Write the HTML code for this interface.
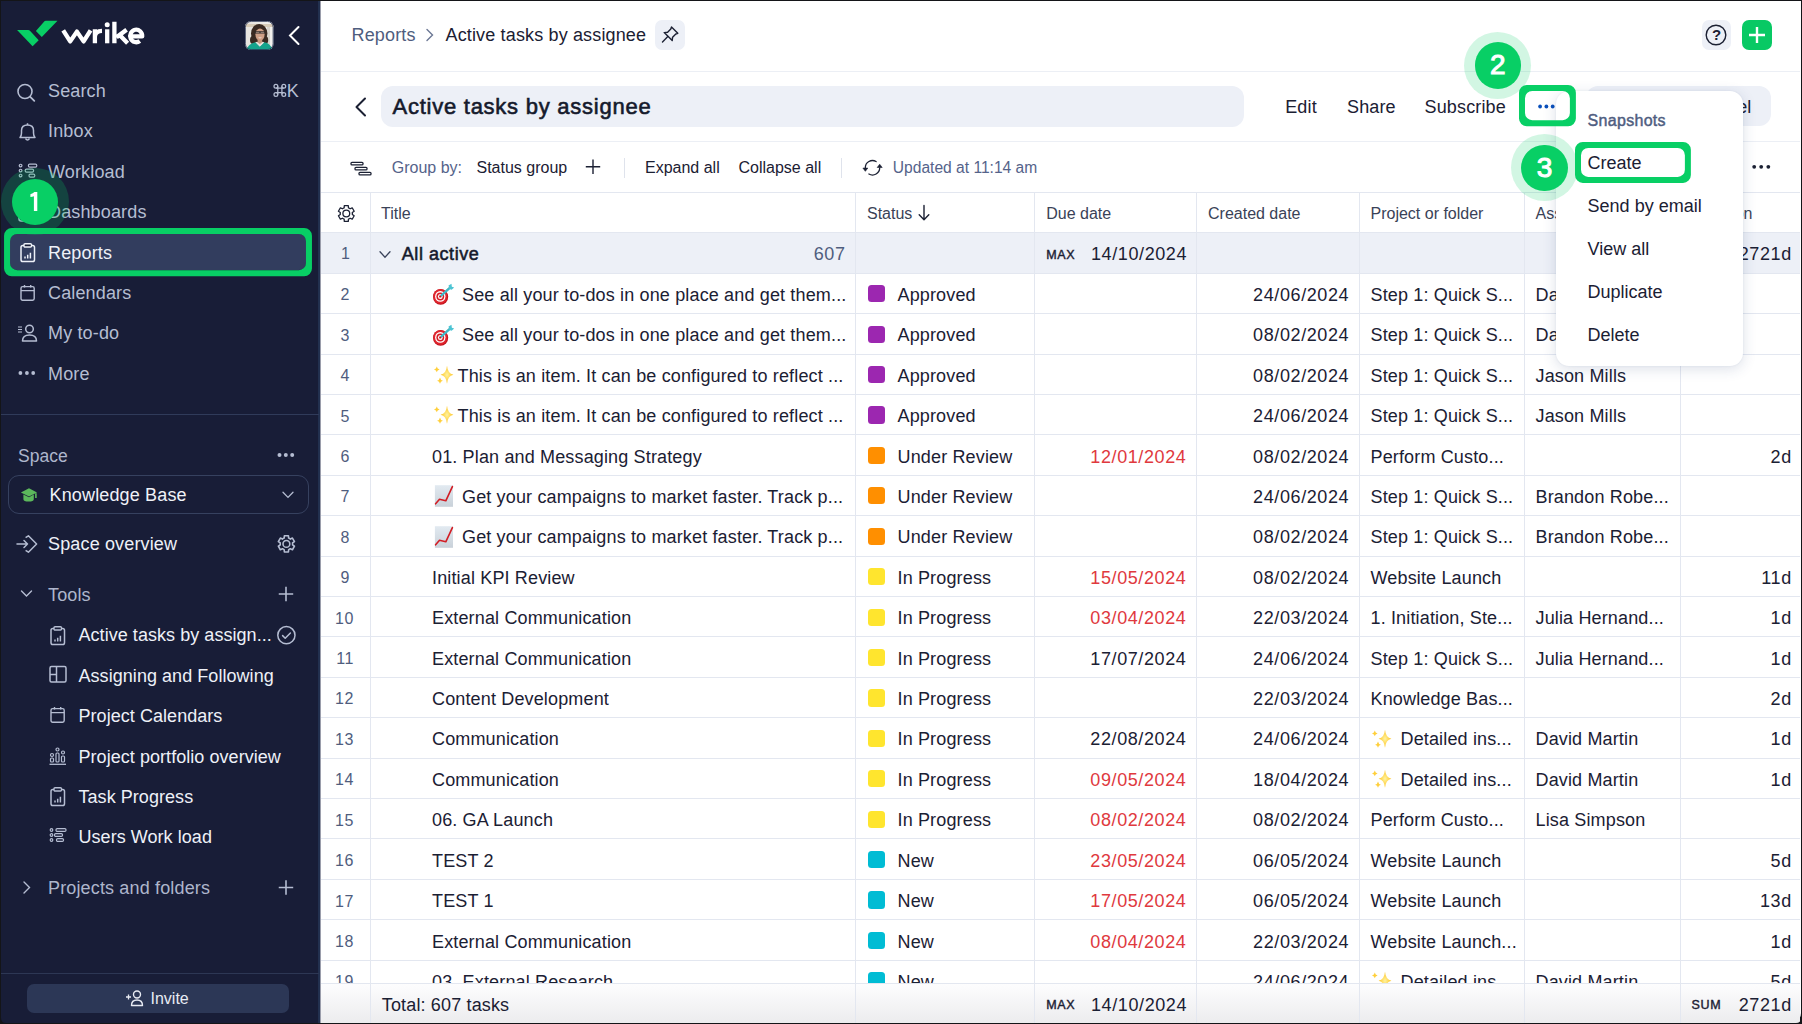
<!DOCTYPE html><html><head><meta charset="utf-8"><title>Wrike report</title><style>
html,body{margin:0;padding:0;width:1802px;height:1024px;overflow:hidden;background:#141518;}
body{position:relative;font-family:"Liberation Sans", sans-serif;}
.t{position:absolute;white-space:nowrap;}
#win{position:absolute;left:1px;top:1px;width:1799.5px;height:1021.5px;overflow:hidden;border-radius:0 0 10px 10px;background:#fff;}
#side{position:absolute;left:0;top:0;width:319px;height:1022px;background:#181d37;}
svg{overflow:visible}
</style></head><body>
<div id="win"></div>

<div style="position:absolute;left:1px;top:1px;width:319px;height:1022px;background:#181d37;"></div>
<div style="position:absolute;left:318.4px;top:1px;width:1.3px;height:1022px;background:#22304f;"></div>
<div style="position:absolute;left:319.7px;top:1px;width:0.9px;height:1022px;background:#9a9dab;"></div>
<svg style="position:absolute;left:0px;top:0px;" width="60" height="60" viewBox="0 0 60 60"><path d="M17.1 30 L28.2 30 Q29.3 30 30.2 30.9 L38.7 40.2 L32.6 46.3 Z" fill="#08cf65"/><path d="M45.9 20.8 L57.5 20.8 L41.8 37 L35.9 31.1 L43.8 21.9 Q44.7 20.8 45.9 20.8 Z" fill="#08cf65"/></svg>
<svg style="position:absolute;left:55px;top:15px;" width="100" height="40" viewBox="0 0 100 40"><g transform="translate(-55,-15)" fill="none" stroke="#fff" stroke-width="4.3" stroke-linejoin="round"><path d="M63.2 30.3 L70.2 41.4 L76.9 31.6 L83.6 41.4 L90.6 30.3"/><path d="M94.9 29.3 V43.3 M94.9 36.5 Q95.5 31 102 30.9"/><path d="M107.2 29.3 V43.3"/><path d="M114.4 21.8 V43.3 M126.6 29.7 L116.5 37.3 M119.6 35 L127.6 43.3"/><path d="M131 36.3 H142.2 A6 6.3 0 1 0 139.8 41"/></g><circle cx="52.2" cy="9.8" r="2.5" fill="#fff"/></svg>
<svg style="position:absolute;left:244.5px;top:20.5px;" width="29" height="29" viewBox="0 0 29 29"><defs><clipPath id="avc"><rect x="0" y="0" width="28.5" height="29" rx="6"/></clipPath><linearGradient id="avbg" x1="0" y1="0" x2="1" y2="0"><stop offset="0" stop-color="#e6e3de"/><stop offset="1" stop-color="#f3f2ef"/></linearGradient></defs><g clip-path="url(#avc)"><rect width="29" height="29" fill="url(#avbg)"/><rect x="0" y="3" width="29" height="3" fill="#d8ccb8"/><rect x="22" y="6" width="3" height="20" fill="#d9d4cc"/><ellipse cx="14.2" cy="12.6" rx="8.2" ry="9.6" fill="#3a2a22"/><ellipse cx="8" cy="19" rx="3" ry="4" fill="#3a2a22"/><ellipse cx="20.6" cy="19" rx="2.6" ry="3.8" fill="#3a2a22"/><ellipse cx="15" cy="13.6" rx="4.6" ry="6.1" fill="#cf9f86"/><rect x="9.6" y="10.2" width="10.6" height="2.4" rx="1" fill="#2b2626"/><rect x="10.8" y="10.8" width="3.6" height="1.3" fill="#8d7a70"/><rect x="15.6" y="10.8" width="3.6" height="1.3" fill="#8d7a70"/><path d="M13 16.6 Q15 18.2 17 16.6" fill="#f5ece6"/><rect x="12.6" y="18.6" width="4.6" height="4" fill="#c8967d"/><path d="M1 30 Q3 22.5 10.5 21.2 L14.8 25.5 L19.2 21.2 Q26 22.3 28 30 Z" fill="#15a38c"/><path d="M10.5 21.2 L14.8 25.5 L19.2 21.2 L17.6 20.8 L14.8 23.6 L12.2 20.8 Z" fill="#e8e0da"/></g><rect x="0.4" y="0.4" width="27.7" height="28.2" rx="5.8" fill="none" stroke="#2a3555" stroke-width="0.8"/></svg>
<svg style="position:absolute;left:288px;top:25px;" width="14" height="22" viewBox="0 0 14 22"><path d="M10.5 2 L2 10.5 L10.5 19" fill="none" stroke="#fff" stroke-width="2" stroke-linecap="round"/></svg>
<div style="position:absolute;left:10px;top:234px;width:296px;height:36px;background:#323d5e;border-radius:7px;"></div>
<div class="t " style="left:48.00px;top:79.96px;font-size:18px;line-height:22px;color:#b5bdd2;letter-spacing:0.15px;">Search</div>
<div class="t " style="left:48.00px;top:120.36px;font-size:18px;line-height:22px;color:#b5bdd2;letter-spacing:0.15px;">Inbox</div>
<div class="t " style="left:48.00px;top:160.76px;font-size:18px;line-height:22px;color:#b5bdd2;letter-spacing:0.15px;">Workload</div>
<div class="t " style="left:48.00px;top:201.16px;font-size:18px;line-height:22px;color:#b5bdd2;letter-spacing:0.15px;">Dashboards</div>
<div class="t " style="left:48.00px;top:241.56px;font-size:18px;line-height:22px;color:#eef1f8;letter-spacing:0.15px;">Reports</div>
<div class="t " style="left:48.00px;top:281.96px;font-size:18px;line-height:22px;color:#b5bdd2;letter-spacing:0.15px;">Calendars</div>
<div class="t " style="left:48.00px;top:322.36px;font-size:18px;line-height:22px;color:#b5bdd2;letter-spacing:0.15px;">My to-do</div>
<div class="t " style="left:48.00px;top:362.76px;font-size:18px;line-height:22px;color:#b5bdd2;letter-spacing:0.15px;">More</div>
<svg style="position:absolute;left:271.5px;top:84px;" width="16" height="14" viewBox="0 0 16 14"><path d="M5.8 2.3 V10.5 M9.9 2.3 V10.5 M3.9 4.2 H11.8 M3.9 8.6 H11.8" fill="none" stroke="#b5bdd2" stroke-width="1.25"/><circle cx="3.9" cy="2.3" r="1.9" fill="none" stroke="#b5bdd2" stroke-width="1.25"/><circle cx="11.8" cy="2.3" r="1.9" fill="none" stroke="#b5bdd2" stroke-width="1.25"/><circle cx="11.8" cy="10.5" r="1.9" fill="none" stroke="#b5bdd2" stroke-width="1.25"/><circle cx="3.9" cy="10.5" r="1.9" fill="none" stroke="#b5bdd2" stroke-width="1.25"/></svg>
<div class="t " style="right:1503.20px;text-align:right;top:79.96px;font-size:18px;line-height:22px;color:#b5bdd2;letter-spacing:0.15px;">K</div>
<svg style="position:absolute;left:16px;top:83px;" width="22" height="22" viewBox="0 0 22 22"><circle cx="9" cy="8.5" r="7" fill="none" stroke="#b5bdd2" stroke-width="1.6"/><path d="M14 13.6 L18.3 17.9" stroke="#b5bdd2" stroke-width="1.8" stroke-linecap="round"/></svg>
<svg style="position:absolute;left:18px;top:122px;" width="20" height="22" viewBox="0 0 20 22"><path d="M2 15.5 H17 Q15.5 14 15.5 11 V8.5 Q15.5 3 9.5 3 Q3.5 3 3.5 8.5 V11 Q3.5 14 2 15.5 Z" fill="none" stroke="#b5bdd2" stroke-width="1.5" stroke-linejoin="round"/><path d="M9.5 1.2 V3" stroke="#b5bdd2" stroke-width="1.5"/><path d="M7.5 16.5 Q9.5 19.5 11.5 16.5" fill="none" stroke="#b5bdd2" stroke-width="1.4"/></svg>
<svg style="position:absolute;left:17px;top:162px;" width="24" height="20" viewBox="0 0 24 20"><circle cx="3.6" cy="3.6" r="1.35" fill="none" stroke="#b5bdd2" stroke-width="1.2"/><circle cx="3.6" cy="8.6" r="1.35" fill="none" stroke="#b5bdd2" stroke-width="1.2"/><circle cx="3.6" cy="13.6" r="1.35" fill="none" stroke="#b5bdd2" stroke-width="1.2"/><rect x="11.4" y="2.2" width="8.4" height="2.9" rx="1.3" fill="none" stroke="#b5bdd2" stroke-width="1.2"/><rect x="8.2" y="7.2" width="8.4" height="2.9" rx="1.3" fill="none" stroke="#b5bdd2" stroke-width="1.2"/><rect x="12" y="12.2" width="5.8" height="2.9" rx="1.3" fill="none" stroke="#b5bdd2" stroke-width="1.2"/></svg>
<svg style="position:absolute;left:18px;top:203px;" width="20" height="20" viewBox="0 0 20 20"><rect x="1" y="1" width="16" height="17" rx="2" fill="none" stroke="#b5bdd2" stroke-width="1.5"/></svg>
<svg style="position:absolute;left:19.5px;top:243px;" width="18" height="20" viewBox="0 0 18 20"><rect x="1" y="2.5" width="13.5" height="16" rx="1.8" fill="none" stroke="#eef1f8" stroke-width="1.5"/><rect x="4" y="0.8" width="7.5" height="3.2" rx="1" fill="#181d37" stroke="#eef1f8" stroke-width="1.4"/><path d="M5 15.5 V13.5 M7.7 15.5 V11.8 M10.4 15.5 V9.8" stroke="#eef1f8" stroke-width="1.5"/></svg>
<svg style="position:absolute;left:19.5px;top:283.6px;" width="20" height="20" viewBox="0 0 20 20"><rect x="1" y="2.6" width="13.2" height="13.6" rx="1.6" fill="none" stroke="#b5bdd2" stroke-width="1.4"/><path d="M1 6.6 H14.2 M4.5 0.9 V3.6 M10.7 0.9 V3.6" stroke="#b5bdd2" stroke-width="1.4"/></svg>
<svg style="position:absolute;left:17px;top:324px;" width="24" height="20" viewBox="0 0 24 20"><path d="M1 3 H5 M1 5.5 H5 M1 8 H5" stroke="#b5bdd2" stroke-width="1.2"/><circle cx="12.5" cy="5" r="3.8" fill="none" stroke="#b5bdd2" stroke-width="1.5"/><path d="M5.5 17 Q5.5 11 12.5 11 Q19.5 11 19.5 17 Z" fill="none" stroke="#b5bdd2" stroke-width="1.5" stroke-linejoin="round"/></svg>
<svg style="position:absolute;left:17px;top:369px;" width="22" height="8" viewBox="0 0 22 8"><circle cx="3.4" cy="4" r="1.9" fill="#b5bdd2"/><circle cx="9.9" cy="4" r="1.9" fill="#b5bdd2"/><circle cx="16.2" cy="4" r="1.9" fill="#b5bdd2"/></svg>
<div style="position:absolute;left:1px;top:413.8px;width:318px;height:1.4px;background:#303b5a;"></div>
<div class="t " style="left:18.00px;top:445.44px;font-size:17.5px;line-height:22px;color:#aeb6cc;">Space</div>
<svg style="position:absolute;left:276px;top:451px;" width="22" height="8" viewBox="0 0 22 8"><circle cx="3.5" cy="4" r="2" fill="#b5bdd2"/><circle cx="9.8" cy="4" r="2" fill="#b5bdd2"/><circle cx="16.2" cy="4" r="2" fill="#b5bdd2"/></svg>
<div style="position:absolute;left:7.5px;top:475.3px;width:301.3px;height:39.2px;border:1.3px solid #36415f;border-radius:11px;box-sizing:border-box;"></div>
<svg style="position:absolute;left:20px;top:486px;" width="24" height="20" viewBox="0 0 24 20"><path d="M0.9 6.5 L9 2.2 L17 6.5 L9 10.6 Z" fill="#5cb85c"/><path d="M3.4 8.6 V13.2 Q3.4 15.6 8.6 15.6 Q13.8 15.6 13.8 13.2 V8.6 L9 11.3 Z" fill="#5cb85c"/><path d="M15.9 7.2 V12" stroke="#5cb85c" stroke-width="1.6"/></svg>
<div class="t " style="left:49.50px;top:484.46px;font-size:18px;line-height:22px;color:#f0f2f8;letter-spacing:0.15px;">Knowledge Base</div>
<svg style="position:absolute;left:281px;top:490px;" width="14" height="10" viewBox="0 0 14 10"><path d="M2 2.2 L7 7.4 L12 2.2" fill="none" stroke="#b5bdd2" stroke-width="1.3" stroke-linecap="round"/></svg>
<svg style="position:absolute;left:16px;top:533px;" width="22" height="22" viewBox="0 0 22 22"><path d="M1 11 H11.5 M8 7.5 L11.5 11 L8 14.5" fill="none" stroke="#b5bdd2" stroke-width="1.5" stroke-linecap="round" stroke-linejoin="round"/><path d="M9.6 4.6 L12.4 2.8 L20.6 11 L12.4 19.2 L9.6 17.4" fill="none" stroke="#b5bdd2" stroke-width="1.5" stroke-linejoin="round"/></svg>
<div class="t " style="left:48.00px;top:533.36px;font-size:18px;line-height:22px;color:#eef1f8;letter-spacing:0.15px;">Space overview</div>
<svg style="position:absolute;left:274px;top:532px;" width="24" height="24" viewBox="0 0 24 24"><path d="M10.17 6.10 L10.37 3.75 L14.43 3.75 L14.63 6.10 A6.22 6.22 0 0 1 16.31 7.07 L18.44 6.06 L20.47 9.58 L18.54 10.93 A6.22 6.22 0 0 1 18.54 12.87 L20.47 14.22 L18.44 17.74 L16.31 16.73 A6.22 6.22 0 0 1 14.63 17.70 L14.43 20.05 L10.37 20.05 L10.17 17.70 A6.22 6.22 0 0 1 8.49 16.73 L6.36 17.74 L4.33 14.22 L6.26 12.87 A6.22 6.22 0 0 1 6.26 10.93 L4.33 9.58 L6.36 6.06 L8.49 7.07 A6.22 6.22 0 0 1 10.17 6.10 Z" fill="none" stroke="#b5bdd2" stroke-width="1.6" stroke-linejoin="round"/><circle cx="12.4" cy="11.9" r="3.4" fill="none" stroke="#b5bdd2" stroke-width="1.6"/></svg>
<svg style="position:absolute;left:20px;top:589px;" width="14" height="10" viewBox="0 0 14 10"><path d="M1.5 2 L6.5 7 L11.5 2" fill="none" stroke="#b5bdd2" stroke-width="1.4" stroke-linecap="round"/></svg>
<div class="t " style="left:48.00px;top:583.66px;font-size:18px;line-height:22px;color:#aeb6cc;letter-spacing:0.15px;">Tools</div>
<svg style="position:absolute;left:276px;top:585px;" width="20" height="20" viewBox="0 0 20 20"><path d="M10 1.7 V16.2 M2.75 9 H17.2" stroke="#b5bdd2" stroke-width="1.6"/></svg>
<div class="t " style="left:78.50px;top:624.46px;font-size:18px;line-height:22px;color:#eef1f8;letter-spacing:0.05px;">Active tasks by assign...</div>
<div class="t " style="left:78.50px;top:664.86px;font-size:18px;line-height:22px;color:#eef1f8;letter-spacing:0.05px;">Assigning and Following</div>
<div class="t " style="left:78.50px;top:705.26px;font-size:18px;line-height:22px;color:#eef1f8;letter-spacing:0.05px;">Project Calendars</div>
<div class="t " style="left:78.50px;top:745.66px;font-size:18px;line-height:22px;color:#eef1f8;letter-spacing:0.05px;">Project portfolio overview</div>
<div class="t " style="left:78.50px;top:786.06px;font-size:18px;line-height:22px;color:#eef1f8;letter-spacing:0.05px;">Task Progress</div>
<div class="t " style="left:78.50px;top:826.46px;font-size:18px;line-height:22px;color:#eef1f8;letter-spacing:0.05px;">Users Work load</div>
<svg style="position:absolute;left:50px;top:625.5px;" width="18" height="20" viewBox="0 0 18 20"><rect x="1" y="2.5" width="13.5" height="16" rx="1.8" fill="none" stroke="#b5bdd2" stroke-width="1.5"/><rect x="4" y="0.8" width="7.5" height="3.2" rx="1" fill="#181d37" stroke="#b5bdd2" stroke-width="1.4"/><path d="M5 15.5 V13.5 M7.7 15.5 V11.8 M10.4 15.5 V9.8" stroke="#b5bdd2" stroke-width="1.5"/></svg>
<svg style="position:absolute;left:48.5px;top:665px;" width="20" height="20" viewBox="0 0 20 20"><rect x="1" y="1.5" width="16" height="15.5" rx="1.5" fill="none" stroke="#b5bdd2" stroke-width="1.5"/><path d="M7.5 1.5 V17 M1 9.5 H7.5" stroke="#b5bdd2" stroke-width="1.5"/></svg>
<svg style="position:absolute;left:49.5px;top:706px;" width="20" height="20" viewBox="0 0 20 20"><rect x="1" y="2.6" width="13.2" height="13.6" rx="1.6" fill="none" stroke="#b5bdd2" stroke-width="1.4"/><path d="M1 6.6 H14.2 M4.5 0.9 V3.6 M10.7 0.9 V3.6" stroke="#b5bdd2" stroke-width="1.4"/></svg>
<svg style="position:absolute;left:49px;top:746px;" width="20" height="20" viewBox="0 0 20 20"><circle cx="3" cy="9" r="1.5" fill="none" stroke="#b5bdd2" stroke-width="1.2"/><rect x="1.5" y="12" width="3" height="4" rx="1" fill="none" stroke="#b5bdd2" stroke-width="1.2"/><circle cx="8.5" cy="3.5" r="1.5" fill="none" stroke="#b5bdd2" stroke-width="1.2"/><rect x="7" y="7" width="3" height="9" rx="1" fill="none" stroke="#b5bdd2" stroke-width="1.2"/><circle cx="14" cy="6.5" r="1.5" fill="none" stroke="#b5bdd2" stroke-width="1.2"/><rect x="12.5" y="10" width="3" height="6" rx="1" fill="none" stroke="#b5bdd2" stroke-width="1.2"/><path d="M0.5 18.3 H17" stroke="#b5bdd2" stroke-width="1.3"/></svg>
<svg style="position:absolute;left:50px;top:787px;" width="18" height="20" viewBox="0 0 18 20"><rect x="1" y="2.5" width="13.5" height="16" rx="1.8" fill="none" stroke="#b5bdd2" stroke-width="1.5"/><rect x="4" y="0.8" width="7.5" height="3.2" rx="1" fill="#181d37" stroke="#b5bdd2" stroke-width="1.4"/><path d="M5 15.5 V13.5 M7.7 15.5 V11.8 M10.4 15.5 V9.8" stroke="#b5bdd2" stroke-width="1.5"/></svg>
<svg style="position:absolute;left:48.5px;top:827px;" width="22" height="20" viewBox="0 0 22 20"><circle cx="2.5" cy="3" r="1.3" fill="none" stroke="#b5bdd2" stroke-width="1.2"/><circle cx="2.5" cy="8" r="1.3" fill="none" stroke="#b5bdd2" stroke-width="1.2"/><circle cx="2.5" cy="13" r="1.3" fill="none" stroke="#b5bdd2" stroke-width="1.2"/><rect x="7" y="1.6" width="10" height="2.8" rx="1.2" fill="none" stroke="#b5bdd2" stroke-width="1.2"/><rect x="5.5" y="6.6" width="8" height="2.8" rx="1.2" fill="none" stroke="#b5bdd2" stroke-width="1.2"/><rect x="7.5" y="11.6" width="7" height="2.8" rx="1.2" fill="none" stroke="#b5bdd2" stroke-width="1.2"/></svg>
<svg style="position:absolute;left:275px;top:624px;" width="22" height="22" viewBox="0 0 22 22"><circle cx="11.4" cy="11.2" r="8.6" fill="none" stroke="#b5bdd2" stroke-width="1.5"/><path d="M7.6 11.6 L10.2 14.2 L15.4 9" fill="none" stroke="#b5bdd2" stroke-width="1.5" stroke-linecap="round" stroke-linejoin="round"/></svg>
<svg style="position:absolute;left:22px;top:880px;" width="10" height="16" viewBox="0 0 10 16"><path d="M2 2 L7.5 7.5 L2 13" fill="none" stroke="#b5bdd2" stroke-width="1.4" stroke-linecap="round"/></svg>
<div class="t " style="left:48.00px;top:876.76px;font-size:18px;line-height:22px;color:#aeb6cc;letter-spacing:0.15px;">Projects and folders</div>
<svg style="position:absolute;left:276px;top:878px;" width="20" height="20" viewBox="0 0 20 20"><path d="M10 2.3 V16.8 M2.75 9.5 H17.2" stroke="#b5bdd2" stroke-width="1.6"/></svg>
<div style="position:absolute;left:1px;top:972.5px;width:318px;height:1.3px;background:#2d3754;"></div>
<div style="position:absolute;left:27.3px;top:984px;width:261.5px;height:29.3px;background:#2c3756;border-radius:7px;"></div>
<svg style="position:absolute;left:125px;top:989px;" width="20" height="18" viewBox="0 0 20 18"><path d="M1 8 H6 M3.5 5.5 V10.5" stroke="#e8ebf3" stroke-width="1.3"/><circle cx="12" cy="5.5" r="3.5" fill="none" stroke="#e8ebf3" stroke-width="1.4"/><path d="M6.5 16.5 Q6.5 11 12 11 Q17.5 11 17.5 16.5 Z" fill="none" stroke="#e8ebf3" stroke-width="1.4" stroke-linejoin="round"/></svg>
<div class="t " style="left:150.50px;top:989.06px;font-size:16px;line-height:20px;color:#e8ebf3;">Invite</div>
<div class="t " style="left:351.50px;top:24.26px;font-size:18px;line-height:22px;color:#4f5d7e;letter-spacing:0.15px;">Reports</div>
<svg style="position:absolute;left:425px;top:28px;" width="10" height="14" viewBox="0 0 10 14"><path d="M2 1.5 L7.5 7 L2 12.5" fill="none" stroke="#6b7794" stroke-width="1.4" stroke-linecap="round"/></svg>
<div class="t " style="left:445.50px;top:24.26px;font-size:18px;line-height:22px;color:#1b2033;letter-spacing:0.15px;">Active tasks by assignee</div>
<div style="position:absolute;left:654.7px;top:20px;width:30px;height:30px;background:#edf0f7;border-radius:7px;"></div>
<svg style="position:absolute;left:659px;top:24px;" width="22" height="22" viewBox="0 0 22 22"><path d="M12.5 3 L18.8 9.3 L16.8 10 L13.6 13.2 L13.2 16.6 L5.2 8.6 L8.6 8.2 L11.8 5 Z" fill="none" stroke="#1b2033" stroke-width="1.4" stroke-linejoin="round"/><path d="M8.8 12.6 L3.5 17.9" stroke="#1b2033" stroke-width="1.4" stroke-linecap="round"/></svg>
<div style="position:absolute;left:1701.5px;top:20.2px;width:29.7px;height:29.7px;background:#edf0f7;border-radius:7px;"></div>
<svg style="position:absolute;left:1705px;top:24px;" width="22" height="22" viewBox="0 0 22 22"><circle cx="11" cy="11" r="9.8" fill="none" stroke="#1b2033" stroke-width="1.4"/></svg>
<div class="t " style="left:1712.00px;top:24.80px;font-size:15px;line-height:19px;color:#1b2033;font-weight:700;">?</div>
<div style="position:absolute;left:1741.8px;top:20.2px;width:30.2px;height:29.7px;background:#08c964;border-radius:7px;"></div>
<svg style="position:absolute;left:1746px;top:24px;" width="22" height="22" viewBox="0 0 22 22"><path d="M11 3 V19 M3 11 H19" stroke="#fff" stroke-width="2.4"/></svg>
<div style="position:absolute;left:321px;top:70.6px;width:1479px;height:1.3px;background:#eceff5;"></div>
<svg style="position:absolute;left:352px;top:95px;" width="18" height="24" viewBox="0 0 18 24"><path d="M13 3.5 L4.5 12 L13 20.5" fill="none" stroke="#1b2033" stroke-width="2" stroke-linecap="round" stroke-linejoin="round"/></svg>
<div style="position:absolute;left:381px;top:86.4px;width:863px;height:40.6px;background:#edf0f7;border-radius:12px;"></div>
<div class="t " style="left:392.50px;top:92.68px;font-size:22px;line-height:28px;color:#151a2c;-webkit-text-stroke:0.6px #151a2c;letter-spacing:0.75px;">Active tasks by assignee</div>
<div class="t " style="left:1285.20px;top:96.26px;font-size:18px;line-height:22px;color:#1b2033;letter-spacing:0.15px;">Edit</div>
<div class="t " style="left:1347.00px;top:96.26px;font-size:18px;line-height:22px;color:#1b2033;letter-spacing:0.15px;">Share</div>
<div class="t " style="left:1424.50px;top:96.26px;font-size:18px;line-height:22px;color:#1b2033;letter-spacing:0.15px;">Subscribe</div>
<svg style="position:absolute;left:1530px;top:100px;" width="34" height="12" viewBox="0 0 34 12"><circle cx="10.1" cy="6.5" r="1.9" fill="#0a50bb"/><circle cx="16.4" cy="6.5" r="1.9" fill="#0a50bb"/><circle cx="22.7" cy="6.5" r="1.9" fill="#0a50bb"/></svg>
<div style="position:absolute;left:1586px;top:86.4px;width:185.4px;height:40px;background:#edf0f7;border-radius:12px;"></div>
<div class="t " style="right:50.50px;text-align:right;top:96.26px;font-size:18px;line-height:22px;color:#1b2033;letter-spacing:0.15px;">Open in panel</div>
<div style="position:absolute;left:321px;top:141px;width:1479px;height:1.3px;background:#eceff5;"></div>
<svg style="position:absolute;left:349px;top:159.6px;" width="24" height="20" viewBox="0 0 24 20"><rect x="2" y="2.3" width="12" height="2.6" rx="1" fill="none" stroke="#1b2033" stroke-width="1.3"/><rect x="6" y="7.3" width="12" height="2.6" rx="1" fill="none" stroke="#1b2033" stroke-width="1.3"/><rect x="10" y="12.3" width="12" height="2.6" rx="1" fill="none" stroke="#1b2033" stroke-width="1.3"/></svg>
<div class="t " style="left:391.80px;top:158.26px;font-size:16px;line-height:20px;color:#55638a;">Group by:</div>
<div class="t " style="left:476.50px;top:158.26px;font-size:16px;line-height:20px;color:#1b2033;">Status group</div>
<svg style="position:absolute;left:584px;top:158px;" width="18" height="18" viewBox="0 0 18 18"><path d="M9 1.5 V16 M1.8 8.8 H16.2" stroke="#1b2033" stroke-width="1.4"/></svg>
<div style="position:absolute;left:624px;top:157.5px;width:1.3px;height:20px;background:#dfe3ec;"></div>
<div class="t " style="left:645.00px;top:158.26px;font-size:16px;line-height:20px;color:#1b2033;">Expand all</div>
<div class="t " style="left:738.50px;top:158.26px;font-size:16px;line-height:20px;color:#1b2033;">Collapse all</div>
<div style="position:absolute;left:841px;top:157.5px;width:1.3px;height:20px;background:#dfe3ec;"></div>
<svg style="position:absolute;left:861px;top:158px;" width="24" height="20" viewBox="0 0 24 20"><path d="M15.1 3.56 A7.2 7.2 0 0 0 4.3 9.8" fill="none" stroke="#1b2033" stroke-width="1.3" stroke-linecap="round"/><path d="M1.9 10.1 L6.8 10.1 L4.35 13.3 Z" fill="#1b2033" stroke="#1b2033" stroke-width="0.6" stroke-linejoin="round"/><path d="M7.9 16.04 A7.2 7.2 0 0 0 18.7 9.8" fill="none" stroke="#1b2033" stroke-width="1.3" stroke-linecap="round"/><path d="M16.2 9.5 L21.2 9.5 L18.7 6.2 Z" fill="#1b2033" stroke="#1b2033" stroke-width="0.6" stroke-linejoin="round"/></svg>
<div class="t " style="left:892.80px;top:158.39px;font-size:15.6px;line-height:20px;color:#55638a;">Updated at 11:14 am</div>
<svg style="position:absolute;left:1750px;top:163px;" width="24" height="8" viewBox="0 0 24 8"><circle cx="4.2" cy="3.8" r="1.9" fill="#1b2033"/><circle cx="11.2" cy="3.8" r="1.9" fill="#1b2033"/><circle cx="18.3" cy="3.8" r="1.9" fill="#1b2033"/></svg>
<div style="position:absolute;left:321px;top:192px;width:1479px;height:1px;background:#e3e7f0;"></div>
<div style="position:absolute;left:321px;top:232px;width:1479px;height:1px;background:#e3e7f0;"></div>
<div style="position:absolute;left:321px;top:273px;width:1479px;height:1px;background:#e3e7f0;"></div>
<div style="position:absolute;left:321px;top:313px;width:1479px;height:1px;background:#e3e7f0;"></div>
<div style="position:absolute;left:321px;top:354px;width:1479px;height:1px;background:#e3e7f0;"></div>
<div style="position:absolute;left:321px;top:394px;width:1479px;height:1px;background:#e3e7f0;"></div>
<div style="position:absolute;left:321px;top:434px;width:1479px;height:1px;background:#e3e7f0;"></div>
<div style="position:absolute;left:321px;top:475px;width:1479px;height:1px;background:#e3e7f0;"></div>
<div style="position:absolute;left:321px;top:515px;width:1479px;height:1px;background:#e3e7f0;"></div>
<div style="position:absolute;left:321px;top:556px;width:1479px;height:1px;background:#e3e7f0;"></div>
<div style="position:absolute;left:321px;top:596px;width:1479px;height:1px;background:#e3e7f0;"></div>
<div style="position:absolute;left:321px;top:636px;width:1479px;height:1px;background:#e3e7f0;"></div>
<div style="position:absolute;left:321px;top:677px;width:1479px;height:1px;background:#e3e7f0;"></div>
<div style="position:absolute;left:321px;top:717px;width:1479px;height:1px;background:#e3e7f0;"></div>
<div style="position:absolute;left:321px;top:758px;width:1479px;height:1px;background:#e3e7f0;"></div>
<div style="position:absolute;left:321px;top:798px;width:1479px;height:1px;background:#e3e7f0;"></div>
<div style="position:absolute;left:321px;top:838px;width:1479px;height:1px;background:#e3e7f0;"></div>
<div style="position:absolute;left:321px;top:879px;width:1479px;height:1px;background:#e3e7f0;"></div>
<div style="position:absolute;left:321px;top:919px;width:1479px;height:1px;background:#e3e7f0;"></div>
<div style="position:absolute;left:321px;top:960px;width:1479px;height:1px;background:#e3e7f0;"></div>
<div style="position:absolute;left:321px;top:233px;width:1479px;height:40px;background:#edf0f7;"></div>
<div style="position:absolute;left:370px;top:192px;width:1px;height:791px;background:#e3e7f0;"></div>
<div style="position:absolute;left:855px;top:192px;width:1px;height:791px;background:#e3e7f0;"></div>
<div style="position:absolute;left:1034px;top:192px;width:1px;height:791px;background:#e3e7f0;"></div>
<div style="position:absolute;left:1196px;top:192px;width:1px;height:791px;background:#e3e7f0;"></div>
<div style="position:absolute;left:1359px;top:192px;width:1px;height:791px;background:#e3e7f0;"></div>
<div style="position:absolute;left:1524px;top:192px;width:1px;height:791px;background:#e3e7f0;"></div>
<div style="position:absolute;left:1680px;top:192px;width:1px;height:791px;background:#e3e7f0;"></div>
<svg style="position:absolute;left:334.5px;top:201.5px;" width="22" height="22" viewBox="0 0 22 22"><path d="M9.13 5.84 L9.32 3.54 L13.28 3.54 L13.47 5.84 A6.07 6.07 0 0 1 15.12 6.78 L17.20 5.80 L19.18 9.24 L17.29 10.55 A6.07 6.07 0 0 1 17.29 12.45 L19.18 13.76 L17.20 17.20 L15.12 16.22 A6.07 6.07 0 0 1 13.47 17.16 L13.28 19.46 L9.32 19.46 L9.13 17.16 A6.07 6.07 0 0 1 7.48 16.22 L5.40 17.20 L3.42 13.76 L5.31 12.45 A6.07 6.07 0 0 1 5.31 10.55 L3.42 9.24 L5.40 5.80 L7.48 6.78 A6.07 6.07 0 0 1 9.13 5.84 Z" fill="none" stroke="#1b2033" stroke-width="1.3" stroke-linejoin="round"/><circle cx="11.3" cy="11.5" r="3.4" fill="none" stroke="#1b2033" stroke-width="1.3"/></svg>
<div class="t " style="left:381.00px;top:203.96px;font-size:16px;line-height:20px;color:#3a4257;">Title</div>
<div class="t " style="left:867.00px;top:203.96px;font-size:16px;line-height:20px;color:#3a4257;">Status</div>
<svg style="position:absolute;left:916.5px;top:204px;" width="14" height="18" viewBox="0 0 14 18"><path d="M7 1.5 V15.5 M2.2 10.8 L7 15.7 L11.8 10.8" fill="none" stroke="#1b2033" stroke-width="1.4" stroke-linecap="round" stroke-linejoin="round"/></svg>
<div class="t " style="left:1046.20px;top:203.96px;font-size:16px;line-height:20px;color:#3a4257;">Due date</div>
<div class="t " style="left:1208.00px;top:203.96px;font-size:16px;line-height:20px;color:#3a4257;">Created date</div>
<div class="t " style="left:1370.50px;top:203.96px;font-size:16px;line-height:20px;color:#3a4257;">Project or folder</div>
<div class="t " style="left:1535.50px;top:203.96px;font-size:16px;line-height:20px;color:#3a4257;">Assignee</div>
<div class="t " style="left:1692.00px;top:203.96px;font-size:16px;line-height:20px;color:#3a4257;">Duration</div>
<div class="t " style="right:1452.00px;text-align:right;top:244.27px;font-size:16px;line-height:20px;color:#4f5d7e;">1</div>
<svg style="position:absolute;left:378px;top:250px;" width="16" height="10" viewBox="0 0 16 10"><path d="M2 1.8 L7 7.2 L12 1.8" fill="none" stroke="#39425a" stroke-width="1.3" stroke-linecap="round"/></svg>
<div class="t " style="left:401.80px;top:242.87px;font-size:18px;line-height:22px;color:#151a2c;-webkit-text-stroke:0.55px #151a2c;letter-spacing:0.55px;">All active</div>
<div class="t " style="right:956.50px;text-align:right;top:242.87px;font-size:18px;line-height:22px;color:#4f5d7e;letter-spacing:0.6px;">607</div>
<div class="t " style="left:1046.20px;top:246.78px;font-size:12.5px;line-height:16px;color:#1b2033;letter-spacing:0.7px;-webkit-text-stroke:0.4px #1b2033;">MAX</div>
<div class="t " style="left:1091.00px;top:242.87px;font-size:18px;line-height:22px;color:#1b2033;letter-spacing:0.6px;">14/10/2024</div>
<div class="t " style="right:10.20px;text-align:right;top:242.87px;font-size:18px;line-height:22px;color:#1b2033;letter-spacing:0.6px;">2721d</div>
<div class="t " style="right:1452.00px;text-align:right;top:285.38px;font-size:16px;line-height:20px;color:#4f5d7e;letter-spacing:0.6px;">2</div>
<svg style="position:absolute;left:432px;top:283.22px;" width="22" height="22" viewBox="0 0 22 22"><path d="M12.5 9.5 L19 3.2" stroke="#d9a441" stroke-width="1.2"/><ellipse cx="8.6" cy="13.8" rx="7.6" ry="7.9" fill="#c3121b"/><ellipse cx="8.3" cy="13.5" rx="7" ry="7.3" fill="#e0262e"/><ellipse cx="8.3" cy="13.4" rx="5.2" ry="5.4" fill="#fff"/><ellipse cx="8.3" cy="13.4" rx="3.9" ry="4" fill="#d81f27"/><ellipse cx="8.3" cy="13.4" rx="2.4" ry="2.5" fill="#fff"/><ellipse cx="8.3" cy="13.4" rx="1.2" ry="1.2" fill="#c3121b"/><path d="M9.5 12.3 L17.5 5.2" stroke="#3fb8c8" stroke-width="2.3" stroke-linecap="round"/><path d="M16.5 2.5 L19.5 0.8 L19.8 3.8 L22.2 4.6 L19.6 6.8 L17.4 6 Z" fill="#4cc4d4"/></svg>
<div class="t " style="left:462.00px;top:283.98px;font-size:18px;line-height:22px;color:#1b2033;letter-spacing:0.15px;">See all your to-dos in one place and get them...</div>
<div style="position:absolute;left:867.8px;top:285.22px;width:17.2px;height:17.2px;background:#9c27b0;border-radius:3.5px;"></div>
<div class="t " style="left:897.50px;top:283.98px;font-size:18px;line-height:22px;color:#1b2033;letter-spacing:0.15px;">Approved</div>
<div class="t " style="right:452.80px;text-align:right;top:283.98px;font-size:18px;line-height:22px;color:#1b2033;letter-spacing:0.6px;">24/06/2024</div>
<div class="t " style="left:1370.50px;top:283.98px;font-size:18px;line-height:22px;color:#1b2033;letter-spacing:0.15px;">Step 1: Quick S...</div>
<div class="t " style="left:1535.50px;top:283.98px;font-size:18px;line-height:22px;color:#1b2033;letter-spacing:0.15px;">David Martin</div>
<div class="t " style="right:1452.00px;text-align:right;top:325.79px;font-size:16px;line-height:20px;color:#4f5d7e;letter-spacing:0.6px;">3</div>
<svg style="position:absolute;left:432px;top:323.63px;" width="22" height="22" viewBox="0 0 22 22"><path d="M12.5 9.5 L19 3.2" stroke="#d9a441" stroke-width="1.2"/><ellipse cx="8.6" cy="13.8" rx="7.6" ry="7.9" fill="#c3121b"/><ellipse cx="8.3" cy="13.5" rx="7" ry="7.3" fill="#e0262e"/><ellipse cx="8.3" cy="13.4" rx="5.2" ry="5.4" fill="#fff"/><ellipse cx="8.3" cy="13.4" rx="3.9" ry="4" fill="#d81f27"/><ellipse cx="8.3" cy="13.4" rx="2.4" ry="2.5" fill="#fff"/><ellipse cx="8.3" cy="13.4" rx="1.2" ry="1.2" fill="#c3121b"/><path d="M9.5 12.3 L17.5 5.2" stroke="#3fb8c8" stroke-width="2.3" stroke-linecap="round"/><path d="M16.5 2.5 L19.5 0.8 L19.8 3.8 L22.2 4.6 L19.6 6.8 L17.4 6 Z" fill="#4cc4d4"/></svg>
<div class="t " style="left:462.00px;top:324.39px;font-size:18px;line-height:22px;color:#1b2033;letter-spacing:0.15px;">See all your to-dos in one place and get them...</div>
<div style="position:absolute;left:867.8px;top:325.63px;width:17.2px;height:17.2px;background:#9c27b0;border-radius:3.5px;"></div>
<div class="t " style="left:897.50px;top:324.39px;font-size:18px;line-height:22px;color:#1b2033;letter-spacing:0.15px;">Approved</div>
<div class="t " style="right:452.80px;text-align:right;top:324.39px;font-size:18px;line-height:22px;color:#1b2033;letter-spacing:0.6px;">08/02/2024</div>
<div class="t " style="left:1370.50px;top:324.39px;font-size:18px;line-height:22px;color:#1b2033;letter-spacing:0.15px;">Step 1: Quick S...</div>
<div class="t " style="left:1535.50px;top:324.39px;font-size:18px;line-height:22px;color:#1b2033;letter-spacing:0.15px;">David Martin</div>
<div class="t " style="right:1452.00px;text-align:right;top:366.20px;font-size:16px;line-height:20px;color:#4f5d7e;letter-spacing:0.6px;">4</div>
<svg style="position:absolute;left:432px;top:363.03999999999996px;" width="22" height="22" viewBox="0 0 22 22"><defs><radialGradient id="sg" cx="0.5" cy="0.5" r="0.5"><stop offset="0" stop-color="#fff3a0"/><stop offset="1" stop-color="#ffc21a"/></radialGradient></defs><path d="M15 2.8 Q15.8 10.8 21.4 11.8 Q15.8 12.8 15 20.8 Q14.2 12.8 8.6 11.8 Q14.2 10.8 15 2.8 Z" fill="url(#sg)"/><path d="M4.8 3.6 Q5.2 6 7.6 6.4 Q5.2 6.8 4.8 9.2 Q4.4 6.8 2 6.4 Q4.4 6 4.8 3.6 Z" fill="#ffcf3a"/><path d="M8 14.6 Q8.4 17.2 10.9 17.7 Q8.4 18.2 8 20.8 Q7.6 18.2 5.1 17.7 Q7.6 17.2 8 14.6 Z" fill="#ffcf3a"/></svg>
<div class="t " style="left:457.50px;top:364.80px;font-size:18px;line-height:22px;color:#1b2033;letter-spacing:0.15px;">This is an item. It can be configured to reflect ...</div>
<div style="position:absolute;left:867.8px;top:366.03999999999996px;width:17.2px;height:17.2px;background:#9c27b0;border-radius:3.5px;"></div>
<div class="t " style="left:897.50px;top:364.80px;font-size:18px;line-height:22px;color:#1b2033;letter-spacing:0.15px;">Approved</div>
<div class="t " style="right:452.80px;text-align:right;top:364.80px;font-size:18px;line-height:22px;color:#1b2033;letter-spacing:0.6px;">08/02/2024</div>
<div class="t " style="left:1370.50px;top:364.80px;font-size:18px;line-height:22px;color:#1b2033;letter-spacing:0.15px;">Step 1: Quick S...</div>
<div class="t " style="left:1535.50px;top:364.80px;font-size:18px;line-height:22px;color:#1b2033;letter-spacing:0.15px;">Jason Mills</div>
<div class="t " style="right:1452.00px;text-align:right;top:406.61px;font-size:16px;line-height:20px;color:#4f5d7e;letter-spacing:0.6px;">5</div>
<svg style="position:absolute;left:432px;top:403.45px;" width="22" height="22" viewBox="0 0 22 22"><defs><radialGradient id="sg" cx="0.5" cy="0.5" r="0.5"><stop offset="0" stop-color="#fff3a0"/><stop offset="1" stop-color="#ffc21a"/></radialGradient></defs><path d="M15 2.8 Q15.8 10.8 21.4 11.8 Q15.8 12.8 15 20.8 Q14.2 12.8 8.6 11.8 Q14.2 10.8 15 2.8 Z" fill="url(#sg)"/><path d="M4.8 3.6 Q5.2 6 7.6 6.4 Q5.2 6.8 4.8 9.2 Q4.4 6.8 2 6.4 Q4.4 6 4.8 3.6 Z" fill="#ffcf3a"/><path d="M8 14.6 Q8.4 17.2 10.9 17.7 Q8.4 18.2 8 20.8 Q7.6 18.2 5.1 17.7 Q7.6 17.2 8 14.6 Z" fill="#ffcf3a"/></svg>
<div class="t " style="left:457.50px;top:405.21px;font-size:18px;line-height:22px;color:#1b2033;letter-spacing:0.15px;">This is an item. It can be configured to reflect ...</div>
<div style="position:absolute;left:867.8px;top:406.45px;width:17.2px;height:17.2px;background:#9c27b0;border-radius:3.5px;"></div>
<div class="t " style="left:897.50px;top:405.21px;font-size:18px;line-height:22px;color:#1b2033;letter-spacing:0.15px;">Approved</div>
<div class="t " style="right:452.80px;text-align:right;top:405.21px;font-size:18px;line-height:22px;color:#1b2033;letter-spacing:0.6px;">24/06/2024</div>
<div class="t " style="left:1370.50px;top:405.21px;font-size:18px;line-height:22px;color:#1b2033;letter-spacing:0.15px;">Step 1: Quick S...</div>
<div class="t " style="left:1535.50px;top:405.21px;font-size:18px;line-height:22px;color:#1b2033;letter-spacing:0.15px;">Jason Mills</div>
<div class="t " style="right:1452.00px;text-align:right;top:447.02px;font-size:16px;line-height:20px;color:#4f5d7e;letter-spacing:0.6px;">6</div>
<div class="t " style="left:432.00px;top:445.62px;font-size:18px;line-height:22px;color:#1b2033;letter-spacing:0.15px;">01. Plan and Messaging Strategy</div>
<div style="position:absolute;left:867.8px;top:446.86px;width:17.2px;height:17.2px;background:#ff8f00;border-radius:3.5px;"></div>
<div class="t " style="left:897.50px;top:445.62px;font-size:18px;line-height:22px;color:#1b2033;letter-spacing:0.15px;">Under Review</div>
<div class="t " style="right:615.60px;text-align:right;top:445.62px;font-size:18px;line-height:22px;color:#e0393e;letter-spacing:0.6px;">12/01/2024</div>
<div class="t " style="right:452.80px;text-align:right;top:445.62px;font-size:18px;line-height:22px;color:#1b2033;letter-spacing:0.6px;">08/02/2024</div>
<div class="t " style="left:1370.50px;top:445.62px;font-size:18px;line-height:22px;color:#1b2033;letter-spacing:0.15px;">Perform Custo...</div>
<div class="t " style="right:10.20px;text-align:right;top:445.62px;font-size:18px;line-height:22px;color:#1b2033;letter-spacing:0.6px;">2d</div>
<div class="t " style="right:1452.00px;text-align:right;top:487.43px;font-size:16px;line-height:20px;color:#4f5d7e;letter-spacing:0.6px;">7</div>
<svg style="position:absolute;left:432px;top:485.27px;" width="22" height="22" viewBox="0 0 22 22"><defs><linearGradient id="cg" x1="0" y1="0" x2="0" y2="1"><stop offset="0" stop-color="#e2eaf1"/><stop offset="1" stop-color="#c9d1d9"/></linearGradient></defs><rect x="2.9" y="0.2" width="18.1" height="21.6" fill="url(#cg)"/><path d="M3.6 18.8 L7.5 14.2 L13.8 15.8 L20.4 1.6" fill="none" stroke="#d21d24" stroke-width="1.6" stroke-linejoin="round" stroke-linecap="round"/></svg>
<div class="t " style="left:462.00px;top:486.03px;font-size:18px;line-height:22px;color:#1b2033;letter-spacing:0.15px;">Get your campaigns to market faster. Track p...</div>
<div style="position:absolute;left:867.8px;top:487.27px;width:17.2px;height:17.2px;background:#ff8f00;border-radius:3.5px;"></div>
<div class="t " style="left:897.50px;top:486.03px;font-size:18px;line-height:22px;color:#1b2033;letter-spacing:0.15px;">Under Review</div>
<div class="t " style="right:452.80px;text-align:right;top:486.03px;font-size:18px;line-height:22px;color:#1b2033;letter-spacing:0.6px;">24/06/2024</div>
<div class="t " style="left:1370.50px;top:486.03px;font-size:18px;line-height:22px;color:#1b2033;letter-spacing:0.15px;">Step 1: Quick S...</div>
<div class="t " style="left:1535.50px;top:486.03px;font-size:18px;line-height:22px;color:#1b2033;letter-spacing:0.15px;">Brandon Robe...</div>
<div class="t " style="right:1452.00px;text-align:right;top:527.84px;font-size:16px;line-height:20px;color:#4f5d7e;letter-spacing:0.6px;">8</div>
<svg style="position:absolute;left:432px;top:525.68px;" width="22" height="22" viewBox="0 0 22 22"><defs><linearGradient id="cg" x1="0" y1="0" x2="0" y2="1"><stop offset="0" stop-color="#e2eaf1"/><stop offset="1" stop-color="#c9d1d9"/></linearGradient></defs><rect x="2.9" y="0.2" width="18.1" height="21.6" fill="url(#cg)"/><path d="M3.6 18.8 L7.5 14.2 L13.8 15.8 L20.4 1.6" fill="none" stroke="#d21d24" stroke-width="1.6" stroke-linejoin="round" stroke-linecap="round"/></svg>
<div class="t " style="left:462.00px;top:526.44px;font-size:18px;line-height:22px;color:#1b2033;letter-spacing:0.15px;">Get your campaigns to market faster. Track p...</div>
<div style="position:absolute;left:867.8px;top:527.68px;width:17.2px;height:17.2px;background:#ff8f00;border-radius:3.5px;"></div>
<div class="t " style="left:897.50px;top:526.44px;font-size:18px;line-height:22px;color:#1b2033;letter-spacing:0.15px;">Under Review</div>
<div class="t " style="right:452.80px;text-align:right;top:526.44px;font-size:18px;line-height:22px;color:#1b2033;letter-spacing:0.6px;">08/02/2024</div>
<div class="t " style="left:1370.50px;top:526.44px;font-size:18px;line-height:22px;color:#1b2033;letter-spacing:0.15px;">Step 1: Quick S...</div>
<div class="t " style="left:1535.50px;top:526.44px;font-size:18px;line-height:22px;color:#1b2033;letter-spacing:0.15px;">Brandon Robe...</div>
<div class="t " style="right:1452.00px;text-align:right;top:568.25px;font-size:16px;line-height:20px;color:#4f5d7e;letter-spacing:0.6px;">9</div>
<div class="t " style="left:432.00px;top:566.85px;font-size:18px;line-height:22px;color:#1b2033;letter-spacing:0.15px;">Initial KPI Review</div>
<div style="position:absolute;left:867.8px;top:568.0899999999999px;width:17.2px;height:17.2px;background:#ffe52e;border-radius:3.5px;"></div>
<div class="t " style="left:897.50px;top:566.85px;font-size:18px;line-height:22px;color:#1b2033;letter-spacing:0.15px;">In Progress</div>
<div class="t " style="right:615.60px;text-align:right;top:566.85px;font-size:18px;line-height:22px;color:#e0393e;letter-spacing:0.6px;">15/05/2024</div>
<div class="t " style="right:452.80px;text-align:right;top:566.85px;font-size:18px;line-height:22px;color:#1b2033;letter-spacing:0.6px;">08/02/2024</div>
<div class="t " style="left:1370.50px;top:566.85px;font-size:18px;line-height:22px;color:#1b2033;letter-spacing:0.15px;">Website Launch</div>
<div class="t " style="right:10.20px;text-align:right;top:566.85px;font-size:18px;line-height:22px;color:#1b2033;letter-spacing:0.6px;">11d</div>
<div class="t " style="right:1448.00px;text-align:right;top:608.66px;font-size:16px;line-height:20px;color:#4f5d7e;letter-spacing:0.6px;">10</div>
<div class="t " style="left:432.00px;top:607.26px;font-size:18px;line-height:22px;color:#1b2033;letter-spacing:0.15px;">External Communication</div>
<div style="position:absolute;left:867.8px;top:608.5px;width:17.2px;height:17.2px;background:#ffe52e;border-radius:3.5px;"></div>
<div class="t " style="left:897.50px;top:607.26px;font-size:18px;line-height:22px;color:#1b2033;letter-spacing:0.15px;">In Progress</div>
<div class="t " style="right:615.60px;text-align:right;top:607.26px;font-size:18px;line-height:22px;color:#e0393e;letter-spacing:0.6px;">03/04/2024</div>
<div class="t " style="right:452.80px;text-align:right;top:607.26px;font-size:18px;line-height:22px;color:#1b2033;letter-spacing:0.6px;">22/03/2024</div>
<div class="t " style="left:1370.50px;top:607.26px;font-size:18px;line-height:22px;color:#1b2033;letter-spacing:0.15px;">1. Initiation, Ste...</div>
<div class="t " style="left:1535.50px;top:607.26px;font-size:18px;line-height:22px;color:#1b2033;letter-spacing:0.15px;">Julia Hernand...</div>
<div class="t " style="right:10.20px;text-align:right;top:607.26px;font-size:18px;line-height:22px;color:#1b2033;letter-spacing:0.6px;">1d</div>
<div class="t " style="right:1448.00px;text-align:right;top:649.07px;font-size:16px;line-height:20px;color:#4f5d7e;letter-spacing:0.6px;">11</div>
<div class="t " style="left:432.00px;top:647.67px;font-size:18px;line-height:22px;color:#1b2033;letter-spacing:0.15px;">External Communication</div>
<div style="position:absolute;left:867.8px;top:648.91px;width:17.2px;height:17.2px;background:#ffe52e;border-radius:3.5px;"></div>
<div class="t " style="left:897.50px;top:647.67px;font-size:18px;line-height:22px;color:#1b2033;letter-spacing:0.15px;">In Progress</div>
<div class="t " style="right:615.60px;text-align:right;top:647.67px;font-size:18px;line-height:22px;color:#1b2033;letter-spacing:0.6px;">17/07/2024</div>
<div class="t " style="right:452.80px;text-align:right;top:647.67px;font-size:18px;line-height:22px;color:#1b2033;letter-spacing:0.6px;">24/06/2024</div>
<div class="t " style="left:1370.50px;top:647.67px;font-size:18px;line-height:22px;color:#1b2033;letter-spacing:0.15px;">Step 1: Quick S...</div>
<div class="t " style="left:1535.50px;top:647.67px;font-size:18px;line-height:22px;color:#1b2033;letter-spacing:0.15px;">Julia Hernand...</div>
<div class="t " style="right:10.20px;text-align:right;top:647.67px;font-size:18px;line-height:22px;color:#1b2033;letter-spacing:0.6px;">1d</div>
<div class="t " style="right:1448.00px;text-align:right;top:689.48px;font-size:16px;line-height:20px;color:#4f5d7e;letter-spacing:0.6px;">12</div>
<div class="t " style="left:432.00px;top:688.08px;font-size:18px;line-height:22px;color:#1b2033;letter-spacing:0.15px;">Content Development</div>
<div style="position:absolute;left:867.8px;top:689.3199999999999px;width:17.2px;height:17.2px;background:#ffe52e;border-radius:3.5px;"></div>
<div class="t " style="left:897.50px;top:688.08px;font-size:18px;line-height:22px;color:#1b2033;letter-spacing:0.15px;">In Progress</div>
<div class="t " style="right:452.80px;text-align:right;top:688.08px;font-size:18px;line-height:22px;color:#1b2033;letter-spacing:0.6px;">22/03/2024</div>
<div class="t " style="left:1370.50px;top:688.08px;font-size:18px;line-height:22px;color:#1b2033;letter-spacing:0.15px;">Knowledge Bas...</div>
<div class="t " style="right:10.20px;text-align:right;top:688.08px;font-size:18px;line-height:22px;color:#1b2033;letter-spacing:0.6px;">2d</div>
<div class="t " style="right:1448.00px;text-align:right;top:729.89px;font-size:16px;line-height:20px;color:#4f5d7e;letter-spacing:0.6px;">13</div>
<div class="t " style="left:432.00px;top:728.49px;font-size:18px;line-height:22px;color:#1b2033;letter-spacing:0.15px;">Communication</div>
<div style="position:absolute;left:867.8px;top:729.7299999999999px;width:17.2px;height:17.2px;background:#ffe52e;border-radius:3.5px;"></div>
<div class="t " style="left:897.50px;top:728.49px;font-size:18px;line-height:22px;color:#1b2033;letter-spacing:0.15px;">In Progress</div>
<div class="t " style="right:615.60px;text-align:right;top:728.49px;font-size:18px;line-height:22px;color:#1b2033;letter-spacing:0.6px;">22/08/2024</div>
<div class="t " style="right:452.80px;text-align:right;top:728.49px;font-size:18px;line-height:22px;color:#1b2033;letter-spacing:0.6px;">24/06/2024</div>
<svg style="position:absolute;left:1370px;top:726.7299999999999px;" width="22" height="22" viewBox="0 0 22 22"><defs><radialGradient id="sg" cx="0.5" cy="0.5" r="0.5"><stop offset="0" stop-color="#fff3a0"/><stop offset="1" stop-color="#ffc21a"/></radialGradient></defs><path d="M15 2.8 Q15.8 10.8 21.4 11.8 Q15.8 12.8 15 20.8 Q14.2 12.8 8.6 11.8 Q14.2 10.8 15 2.8 Z" fill="url(#sg)"/><path d="M4.8 3.6 Q5.2 6 7.6 6.4 Q5.2 6.8 4.8 9.2 Q4.4 6.8 2 6.4 Q4.4 6 4.8 3.6 Z" fill="#ffcf3a"/><path d="M8 14.6 Q8.4 17.2 10.9 17.7 Q8.4 18.2 8 20.8 Q7.6 18.2 5.1 17.7 Q7.6 17.2 8 14.6 Z" fill="#ffcf3a"/></svg>
<div class="t " style="left:1400.50px;top:728.49px;font-size:18px;line-height:22px;color:#1b2033;letter-spacing:0.15px;">Detailed ins...</div>
<div class="t " style="left:1535.50px;top:728.49px;font-size:18px;line-height:22px;color:#1b2033;letter-spacing:0.15px;">David Martin</div>
<div class="t " style="right:10.20px;text-align:right;top:728.49px;font-size:18px;line-height:22px;color:#1b2033;letter-spacing:0.6px;">1d</div>
<div class="t " style="right:1448.00px;text-align:right;top:770.30px;font-size:16px;line-height:20px;color:#4f5d7e;letter-spacing:0.6px;">14</div>
<div class="t " style="left:432.00px;top:768.90px;font-size:18px;line-height:22px;color:#1b2033;letter-spacing:0.15px;">Communication</div>
<div style="position:absolute;left:867.8px;top:770.14px;width:17.2px;height:17.2px;background:#ffe52e;border-radius:3.5px;"></div>
<div class="t " style="left:897.50px;top:768.90px;font-size:18px;line-height:22px;color:#1b2033;letter-spacing:0.15px;">In Progress</div>
<div class="t " style="right:615.60px;text-align:right;top:768.90px;font-size:18px;line-height:22px;color:#e0393e;letter-spacing:0.6px;">09/05/2024</div>
<div class="t " style="right:452.80px;text-align:right;top:768.90px;font-size:18px;line-height:22px;color:#1b2033;letter-spacing:0.6px;">18/04/2024</div>
<svg style="position:absolute;left:1370px;top:767.14px;" width="22" height="22" viewBox="0 0 22 22"><defs><radialGradient id="sg" cx="0.5" cy="0.5" r="0.5"><stop offset="0" stop-color="#fff3a0"/><stop offset="1" stop-color="#ffc21a"/></radialGradient></defs><path d="M15 2.8 Q15.8 10.8 21.4 11.8 Q15.8 12.8 15 20.8 Q14.2 12.8 8.6 11.8 Q14.2 10.8 15 2.8 Z" fill="url(#sg)"/><path d="M4.8 3.6 Q5.2 6 7.6 6.4 Q5.2 6.8 4.8 9.2 Q4.4 6.8 2 6.4 Q4.4 6 4.8 3.6 Z" fill="#ffcf3a"/><path d="M8 14.6 Q8.4 17.2 10.9 17.7 Q8.4 18.2 8 20.8 Q7.6 18.2 5.1 17.7 Q7.6 17.2 8 14.6 Z" fill="#ffcf3a"/></svg>
<div class="t " style="left:1400.50px;top:768.90px;font-size:18px;line-height:22px;color:#1b2033;letter-spacing:0.15px;">Detailed ins...</div>
<div class="t " style="left:1535.50px;top:768.90px;font-size:18px;line-height:22px;color:#1b2033;letter-spacing:0.15px;">David Martin</div>
<div class="t " style="right:10.20px;text-align:right;top:768.90px;font-size:18px;line-height:22px;color:#1b2033;letter-spacing:0.6px;">1d</div>
<div class="t " style="right:1448.00px;text-align:right;top:810.71px;font-size:16px;line-height:20px;color:#4f5d7e;letter-spacing:0.6px;">15</div>
<div class="t " style="left:432.00px;top:809.31px;font-size:18px;line-height:22px;color:#1b2033;letter-spacing:0.15px;">06. GA Launch</div>
<div style="position:absolute;left:867.8px;top:810.55px;width:17.2px;height:17.2px;background:#ffe52e;border-radius:3.5px;"></div>
<div class="t " style="left:897.50px;top:809.31px;font-size:18px;line-height:22px;color:#1b2033;letter-spacing:0.15px;">In Progress</div>
<div class="t " style="right:615.60px;text-align:right;top:809.31px;font-size:18px;line-height:22px;color:#e0393e;letter-spacing:0.6px;">08/02/2024</div>
<div class="t " style="right:452.80px;text-align:right;top:809.31px;font-size:18px;line-height:22px;color:#1b2033;letter-spacing:0.6px;">08/02/2024</div>
<div class="t " style="left:1370.50px;top:809.31px;font-size:18px;line-height:22px;color:#1b2033;letter-spacing:0.15px;">Perform Custo...</div>
<div class="t " style="left:1535.50px;top:809.31px;font-size:18px;line-height:22px;color:#1b2033;letter-spacing:0.15px;">Lisa Simpson</div>
<div class="t " style="right:1448.00px;text-align:right;top:851.12px;font-size:16px;line-height:20px;color:#4f5d7e;letter-spacing:0.6px;">16</div>
<div class="t " style="left:432.00px;top:849.72px;font-size:18px;line-height:22px;color:#1b2033;letter-spacing:0.15px;">TEST 2</div>
<div style="position:absolute;left:867.8px;top:850.9599999999999px;width:17.2px;height:17.2px;background:#00bcd4;border-radius:3.5px;"></div>
<div class="t " style="left:897.50px;top:849.72px;font-size:18px;line-height:22px;color:#1b2033;letter-spacing:0.15px;">New</div>
<div class="t " style="right:615.60px;text-align:right;top:849.72px;font-size:18px;line-height:22px;color:#e0393e;letter-spacing:0.6px;">23/05/2024</div>
<div class="t " style="right:452.80px;text-align:right;top:849.72px;font-size:18px;line-height:22px;color:#1b2033;letter-spacing:0.6px;">06/05/2024</div>
<div class="t " style="left:1370.50px;top:849.72px;font-size:18px;line-height:22px;color:#1b2033;letter-spacing:0.15px;">Website Launch</div>
<div class="t " style="right:10.20px;text-align:right;top:849.72px;font-size:18px;line-height:22px;color:#1b2033;letter-spacing:0.6px;">5d</div>
<div class="t " style="right:1448.00px;text-align:right;top:891.53px;font-size:16px;line-height:20px;color:#4f5d7e;letter-spacing:0.6px;">17</div>
<div class="t " style="left:432.00px;top:890.13px;font-size:18px;line-height:22px;color:#1b2033;letter-spacing:0.15px;">TEST 1</div>
<div style="position:absolute;left:867.8px;top:891.3699999999999px;width:17.2px;height:17.2px;background:#00bcd4;border-radius:3.5px;"></div>
<div class="t " style="left:897.50px;top:890.13px;font-size:18px;line-height:22px;color:#1b2033;letter-spacing:0.15px;">New</div>
<div class="t " style="right:615.60px;text-align:right;top:890.13px;font-size:18px;line-height:22px;color:#e0393e;letter-spacing:0.6px;">17/05/2024</div>
<div class="t " style="right:452.80px;text-align:right;top:890.13px;font-size:18px;line-height:22px;color:#1b2033;letter-spacing:0.6px;">06/05/2024</div>
<div class="t " style="left:1370.50px;top:890.13px;font-size:18px;line-height:22px;color:#1b2033;letter-spacing:0.15px;">Website Launch</div>
<div class="t " style="right:10.20px;text-align:right;top:890.13px;font-size:18px;line-height:22px;color:#1b2033;letter-spacing:0.6px;">13d</div>
<div class="t " style="right:1448.00px;text-align:right;top:931.94px;font-size:16px;line-height:20px;color:#4f5d7e;letter-spacing:0.6px;">18</div>
<div class="t " style="left:432.00px;top:930.54px;font-size:18px;line-height:22px;color:#1b2033;letter-spacing:0.15px;">External Communication</div>
<div style="position:absolute;left:867.8px;top:931.7799999999999px;width:17.2px;height:17.2px;background:#00bcd4;border-radius:3.5px;"></div>
<div class="t " style="left:897.50px;top:930.54px;font-size:18px;line-height:22px;color:#1b2033;letter-spacing:0.15px;">New</div>
<div class="t " style="right:615.60px;text-align:right;top:930.54px;font-size:18px;line-height:22px;color:#e0393e;letter-spacing:0.6px;">08/04/2024</div>
<div class="t " style="right:452.80px;text-align:right;top:930.54px;font-size:18px;line-height:22px;color:#1b2033;letter-spacing:0.6px;">22/03/2024</div>
<div class="t " style="left:1370.50px;top:930.54px;font-size:18px;line-height:22px;color:#1b2033;letter-spacing:0.15px;">Website Launch...</div>
<div class="t " style="right:10.20px;text-align:right;top:930.54px;font-size:18px;line-height:22px;color:#1b2033;letter-spacing:0.6px;">1d</div>
<div class="t " style="right:1448.00px;text-align:right;top:972.35px;font-size:16px;line-height:20px;color:#4f5d7e;letter-spacing:0.6px;">19</div>
<div class="t " style="left:432.00px;top:970.95px;font-size:18px;line-height:22px;color:#1b2033;letter-spacing:0.15px;">03. External Research</div>
<div style="position:absolute;left:867.8px;top:972.1899999999999px;width:17.2px;height:17.2px;background:#00bcd4;border-radius:3.5px;"></div>
<div class="t " style="left:897.50px;top:970.95px;font-size:18px;line-height:22px;color:#1b2033;letter-spacing:0.15px;">New</div>
<div class="t " style="right:452.80px;text-align:right;top:970.95px;font-size:18px;line-height:22px;color:#1b2033;letter-spacing:0.6px;">24/06/2024</div>
<svg style="position:absolute;left:1370px;top:969.1899999999999px;" width="22" height="22" viewBox="0 0 22 22"><defs><radialGradient id="sg" cx="0.5" cy="0.5" r="0.5"><stop offset="0" stop-color="#fff3a0"/><stop offset="1" stop-color="#ffc21a"/></radialGradient></defs><path d="M15 2.8 Q15.8 10.8 21.4 11.8 Q15.8 12.8 15 20.8 Q14.2 12.8 8.6 11.8 Q14.2 10.8 15 2.8 Z" fill="url(#sg)"/><path d="M4.8 3.6 Q5.2 6 7.6 6.4 Q5.2 6.8 4.8 9.2 Q4.4 6.8 2 6.4 Q4.4 6 4.8 3.6 Z" fill="#ffcf3a"/><path d="M8 14.6 Q8.4 17.2 10.9 17.7 Q8.4 18.2 8 20.8 Q7.6 18.2 5.1 17.7 Q7.6 17.2 8 14.6 Z" fill="#ffcf3a"/></svg>
<div class="t " style="left:1400.50px;top:970.95px;font-size:18px;line-height:22px;color:#1b2033;letter-spacing:0.15px;">Detailed ins...</div>
<div class="t " style="left:1535.50px;top:970.95px;font-size:18px;line-height:22px;color:#1b2033;letter-spacing:0.15px;">David Martin</div>
<div class="t " style="right:10.20px;text-align:right;top:970.95px;font-size:18px;line-height:22px;color:#1b2033;letter-spacing:0.6px;">5d</div>
<div style="position:absolute;left:321px;top:983.3px;width:1479px;height:40px;background:linear-gradient(#fdfdfe,#ececee);border-top:1.2px solid #e3e7f0;box-sizing:border-box;"></div>
<div style="position:absolute;left:370px;top:983px;width:1px;height:40px;background:#e3e7f0;"></div>
<div style="position:absolute;left:855px;top:983px;width:1px;height:40px;background:#e3e7f0;"></div>
<div style="position:absolute;left:1034px;top:983px;width:1px;height:40px;background:#e3e7f0;"></div>
<div style="position:absolute;left:1196px;top:983px;width:1px;height:40px;background:#e3e7f0;"></div>
<div style="position:absolute;left:1359px;top:983px;width:1px;height:40px;background:#e3e7f0;"></div>
<div style="position:absolute;left:1524px;top:983px;width:1px;height:40px;background:#e3e7f0;"></div>
<div style="position:absolute;left:1680px;top:983px;width:1px;height:40px;background:#e3e7f0;"></div>
<div class="t " style="left:381.80px;top:993.56px;font-size:18px;line-height:22px;color:#1b2033;letter-spacing:0.15px;">Total: 607 tasks</div>
<div class="t " style="left:1046.20px;top:997.47px;font-size:12.5px;line-height:16px;color:#1b2033;letter-spacing:0.7px;-webkit-text-stroke:0.4px #1b2033;">MAX</div>
<div class="t " style="left:1091.00px;top:993.56px;font-size:18px;line-height:22px;color:#1b2033;letter-spacing:0.6px;">14/10/2024</div>
<div class="t " style="left:1691.50px;top:997.47px;font-size:12.5px;line-height:16px;color:#1b2033;letter-spacing:0.7px;-webkit-text-stroke:0.4px #1b2033;">SUM</div>
<div class="t " style="right:10.20px;text-align:right;top:993.56px;font-size:18px;line-height:22px;color:#1b2033;letter-spacing:0.6px;">2721d</div>
<div style="position:absolute;left:1555.8px;top:91px;width:187.5px;height:275px;background:#fff;border-radius:13px;box-shadow:0 3px 14px rgba(40,60,120,0.16),0 0 2px rgba(40,60,120,0.08);"></div>
<div class="t " style="left:1587.60px;top:110.76px;font-size:16px;line-height:20px;color:#4f5d80;-webkit-text-stroke:0.45px #4f5d80;letter-spacing:0.3px;">Snapshots</div>
<div class="t " style="left:1587.60px;top:151.86px;font-size:18px;line-height:22px;color:#1b2033;letter-spacing:0px;">Create</div>
<div class="t " style="left:1587.60px;top:194.66px;font-size:18px;line-height:22px;color:#1b2033;letter-spacing:0px;">Send by email</div>
<div class="t " style="left:1587.60px;top:238.26px;font-size:18px;line-height:22px;color:#1b2033;letter-spacing:0px;">View all</div>
<div class="t " style="left:1587.60px;top:281.06px;font-size:18px;line-height:22px;color:#1b2033;letter-spacing:0px;">Duplicate</div>
<div class="t " style="left:1587.60px;top:324.46px;font-size:18px;line-height:22px;color:#1b2033;letter-spacing:0px;">Delete</div>
<div style="position:absolute;left:1.2999999999999972px;top:168.0px;width:67.4px;height:67.4px;background:rgba(8,207,101,0.22);border-radius:50%;"></div>
<div style="position:absolute;left:11.8px;top:178.5px;width:46.4px;height:46.4px;background:#08cf65;border-radius:50%;"></div>
<svg style="position:absolute;left:0px;top:0px;" width="60" height="240" viewBox="0 0 60 240"><path d="M37.3 192.1 V210.9 H33.9 V196.3 Q32.3 196.9 30.4 196.9 V194.2 Q33 193.6 34.4 192.1 Z" fill="#fff"/></svg>
<div style="position:absolute;left:1464.0px;top:31.799999999999997px;width:67.4px;height:67.4px;background:rgba(8,207,101,0.18);border-radius:50%;"></div>
<div style="position:absolute;left:1474.5px;top:42.3px;width:46.4px;height:46.4px;background:#08cf65;border-radius:50%;"></div>
<div class="t " style="left:1489.20px;top:47.20px;font-size:28px;line-height:35px;color:#fff;width:17px;text-align:center;-webkit-text-stroke:1px #fff;">2</div>
<div style="position:absolute;left:1510.8px;top:134.10000000000002px;width:67.4px;height:67.4px;background:rgba(8,207,101,0.18);border-radius:50%;"></div>
<div style="position:absolute;left:1521.3px;top:144.60000000000002px;width:46.4px;height:46.4px;background:#08cf65;border-radius:50%;"></div>
<div class="t " style="left:1536.00px;top:149.50px;font-size:28px;line-height:35px;color:#fff;width:17px;text-align:center;-webkit-text-stroke:1px #fff;">3</div>
<svg style="position:absolute;left:4.1px;top:227.8px;" width="308.0" height="48.19999999999999" viewBox="0 0 308.0 48.19999999999999"><path fill-rule="evenodd" fill="#08cf65" d="M7.80 0.00 H300.20 A7.8 7.8 0 0 1 308.00 7.80 V40.40 A7.8 7.8 0 0 1 300.20 48.20 H7.80 A7.8 7.8 0 0 1 0.00 40.40 V7.80 A7.8 7.8 0 0 1 7.80 0.00 Z M13.20 6.00 H294.80 A7.2 7.2 0 0 1 302.00 13.20 V35.00 A7.2 7.2 0 0 1 294.80 42.20 H13.20 A7.2 7.2 0 0 1 6.00 35.00 V13.20 A7.2 7.2 0 0 1 13.20 6.00 Z"/></svg>
<svg style="position:absolute;left:1519.1px;top:85px;" width="56.90000000000009" height="41.2" viewBox="0 0 56.90000000000009 41.2"><path fill-rule="evenodd" fill="#08cf65" d="M7.80 0.00 H49.10 A7.8 7.8 0 0 1 56.90 7.80 V33.40 A7.8 7.8 0 0 1 49.10 41.20 H7.80 A7.8 7.8 0 0 1 0.00 33.40 V7.80 A7.8 7.8 0 0 1 7.80 0.00 Z M13.20 6.00 H43.70 A7.2 7.2 0 0 1 50.90 13.20 V28.00 A7.2 7.2 0 0 1 43.70 35.20 H13.20 A7.2 7.2 0 0 1 6.00 28.00 V13.20 A7.2 7.2 0 0 1 13.20 6.00 Z"/></svg>
<svg style="position:absolute;left:1575.2px;top:141.9px;" width="115.89999999999986" height="40.900000000000006" viewBox="0 0 115.89999999999986 40.900000000000006"><path fill-rule="evenodd" fill="#08cf65" d="M7.80 0.00 H108.10 A7.8 7.8 0 0 1 115.90 7.80 V33.10 A7.8 7.8 0 0 1 108.10 40.90 H7.80 A7.8 7.8 0 0 1 0.00 33.10 V7.80 A7.8 7.8 0 0 1 7.80 0.00 Z M13.20 6.00 H102.70 A7.2 7.2 0 0 1 109.90 13.20 V27.70 A7.2 7.2 0 0 1 102.70 34.90 H13.20 A7.2 7.2 0 0 1 6.00 27.70 V13.20 A7.2 7.2 0 0 1 13.20 6.00 Z"/></svg>
<svg style="position:absolute;left:0px;top:1012px;" width="12" height="12" viewBox="0 0 12 12"><path d="M1 1 V6 Q1 11 6 11 H12 V12 H0 V1 Z" fill="#141518"/></svg>
<svg style="position:absolute;left:1790px;top:1012px;" width="12" height="12" viewBox="0 0 12 12"><path d="M11 1 V6 Q11 11 6 11 H0 V12 H12 V1 Z" fill="#141518"/></svg>
</body></html>
